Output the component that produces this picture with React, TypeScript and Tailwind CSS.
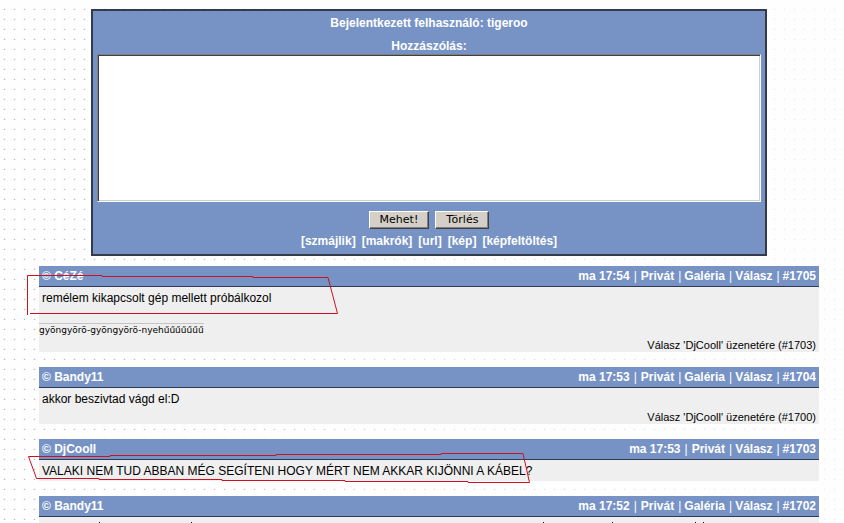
import { useState } from 'react'
import type { ReactNode } from 'react'

interface Post {
  id: number
  author: string
  time: string
  links: string[]
  text: string
  signature?: string
  replyTo?: number
}

const posts: Post[] = [
  {
    id: 1705,
    author: 'CéZé',
    time: 'ma 17:54',
    links: ['Privát', 'Galéria', 'Válasz'],
    text: 'remélem kikapcsolt gép mellett próbálkozol',
    signature: 'gyöngyörö-gyöngyörö-nyehűűűűűűű',
    replyTo: 1703,
  },
  {
    id: 1704,
    author: 'Bandy11',
    time: 'ma 17:53',
    links: ['Privát', 'Galéria', 'Válasz'],
    text: 'akkor beszivtad vágd el:D',
    replyTo: 1700,
  },
  {
    id: 1703,
    author: 'DjCooll',
    time: 'ma 17:53',
    links: ['Privát', 'Válasz'],
    text: 'VALAKI NEM TUD ABBAN MÉG SEGÍTENI HOGY MÉRT NEM AKKAR KIJÖNNI A KÁBEL?',
  },
  {
    id: 1702,
    author: 'Bandy11',
    time: 'ma 17:52',
    links: ['Privát', 'Galéria', 'Válasz'],
    text: '',
  },
]

const helpers = ['szmájlik', 'makrók', 'url', 'kép', 'képfeltöltés']

// Dotted paper behind the page, fading towards the right edge
function DottedBackground() {
  return (
    <svg className="pointer-events-none absolute inset-0 -z-10 h-full w-full" aria-hidden="true" shapeRendering="crispEdges">
      <defs>
        <pattern id="dots" width="10" height="10" patternUnits="userSpaceOnUse">
          <path d="M3 9h3v1H3zM4 8h1v2H4z" fill="#efefed" />
          <rect x="4" y="9" width="1" height="1" fill="#b9bdb9" />
        </pattern>
        <linearGradient id="fade">
          <stop offset="0" stopColor="#fefefe" stopOpacity="0" />
          <stop offset="0.3" stopColor="#fefefe" stopOpacity="0.15" />
          <stop offset="0.5" stopColor="#fefefe" stopOpacity="0.5" />
          <stop offset="1" stopColor="#fefefe" stopOpacity="0.7" />
        </linearGradient>
      </defs>
      <rect y="8" width="100%" height="100%" fill="url(#dots)" />
      <rect width="100%" height="100%" fill="url(#fade)" />
    </svg>
  )
}

function FormButton({ type, children }: { type: 'submit' | 'reset'; children: ReactNode }) {
  return (
    <button
      type={type}
      className="border border-t-white border-l-white border-r-[#404040] border-b-[#404040] bg-[#d4d0c8] px-2.5 font-['DejaVu_Sans',sans-serif] text-[11px] leading-4 font-normal text-black shadow-[inset_-1px_-1px_0_#808080]"
    >
      {children}
    </button>
  )
}

function CommentForm() {
  const [message, setMessage] = useState('')

  return (
    <form
      onSubmit={(e) => e.preventDefault()}
      onReset={() => setMessage('')}
      className="mx-13 flex flex-col items-center border-2 border-[#333a4a] bg-[#7793c6] px-1 pt-1 pb-[5px] font-bold text-white"
    >
      <p className="leading-4">Bejelentkezett felhasználó: tigeroo</p>
      <label htmlFor="message" className="mt-[7px] leading-4">
        Hozzászólás:
      </label>
      <textarea
        id="message"
        value={message}
        onChange={(e) => setMessage(e.target.value)}
        className="block h-37 w-full resize-none border border-t-[#808080] border-l-[#808080] border-r-white border-b-white bg-white p-1 font-normal text-black shadow-[inset_1px_1px_0_#404040,inset_-1px_-1px_0_#c8d0c8] outline-none"
      />
      <div className="mt-[9px] flex gap-1.5">
        <FormButton type="submit">Mehet!</FormButton>
        <FormButton type="reset">Törlés</FormButton>
      </div>
      <div className="mt-1 flex gap-1.5 leading-4">
        {helpers.map((name) => (
          <a key={name} href={`#${name}`}>
            [{name}]
          </a>
        ))}
      </div>
    </form>
  )
}

function PostItem({ post, children }: { post: Post; children?: ReactNode }) {
  return (
    <article className="relative">
      <header className="flex justify-between border-b border-[#2f3b55] bg-[#7793c6] px-[3px] py-0.5 leading-4 font-bold text-white">
        <a href={`#user-${post.author}`}>© {post.author}</a>
        <div className="flex">
          <span>{post.time}</span>
          <span className="mr-1 ml-1 font-normal">|</span>
          {post.links.map((link) => (
            <span key={link}>
              <a href={`#${post.id}`}>{link}</a>
              <span className="mr-[3px] ml-1 font-normal">|</span>
            </span>
          ))}
          <a href={`#${post.id}`}>#{post.id}</a>
        </div>
      </header>
      <div className="bg-[#efefef] text-black">
        <p className="min-h-[21px] px-[3px] pt-[3px] pb-0.5 leading-4">{post.text}</p>
        {post.signature && (
          <div className="mt-[15px] flex">
            <p className="border-t border-[#c4c4c4] font-['DejaVu_Sans',sans-serif] text-[9px] leading-[13px]">
              {post.signature}
            </p>
          </div>
        )}
        {post.replyTo && (
          <p className="px-[3px] pt-0.5 text-right text-[11px] leading-[13px]">
            Válasz 'DjCooll' üzenetére (#{post.replyTo})
          </p>
        )}
      </div>
      {children}
    </article>
  )
}

export default function App() {
  return (
    <div className="relative isolate h-screen overflow-hidden bg-[#fefefe] pt-[9px] pr-[25px] pl-[39px] font-['Liberation_Sans',Arial,sans-serif] text-[12px]">
      <DottedBackground />
      <CommentForm />
      <main className="mt-2.5 flex flex-col gap-[15px]">
        {posts.map((post) => (
          <PostItem key={post.id} post={post}>
            {/* red pen marks around the two highlighted messages */}
            {post.id === 1705 && (
              <svg className="pointer-events-none absolute top-0 -left-3" width="312" height="50" fill="none" stroke="#cc1122">
                <path d="M0.5 49V9.5H75V10.5H226V11.5H301L310.5 47.5H3" />
              </svg>
            )}
            {post.id === 1703 && (
              <svg className="pointer-events-none absolute top-3 -left-3" width="504" height="34" fill="none" stroke="#cc1122">
                <path d="M1.5 5.5H83V4.5H249V3.5H414V2.5H496L502.5 31.5H441V30.5H318V29.5H195V28.5H72V27.5H9.5Z" />
              </svg>
            )}
            {/* accent tips of the line cut off by the window edge */}
            {post.id === 1702 && (
              <svg className="pointer-events-none absolute top-[26px] left-0" width="780" height="1" stroke="#111111">
                <path d="M60 .5h1M152 .5h1M504 .5h1M573 .5h1M656 .5h1M664 .5h1" />
              </svg>
            )}
          </PostItem>
        ))}
      </main>
    </div>
  )
}
